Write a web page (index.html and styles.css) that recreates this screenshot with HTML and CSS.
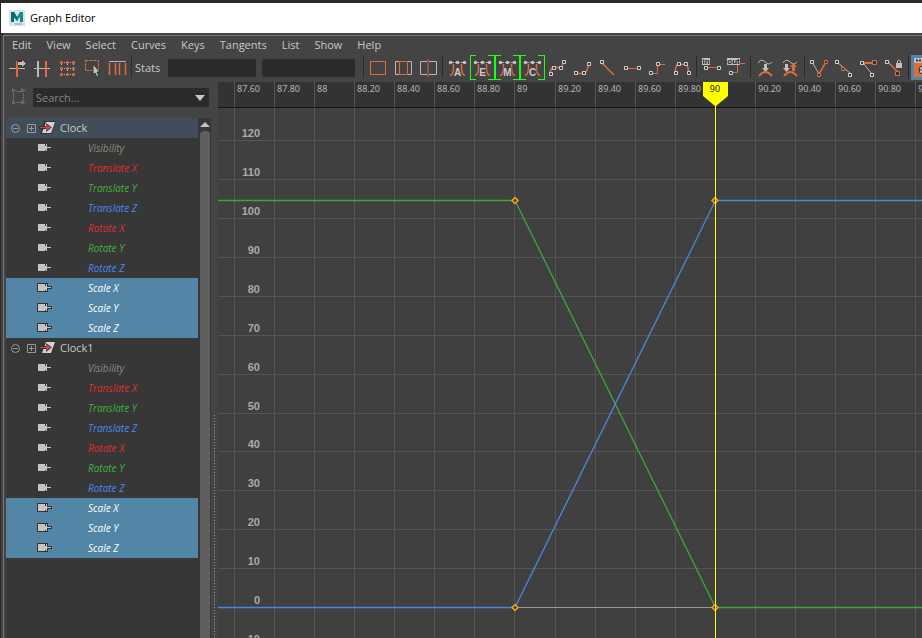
FILE: index.html
```
<!DOCTYPE html>
<html lang="en">
<head>
<meta charset="utf-8">
<title>Graph Editor</title>
<link rel="stylesheet" href="styles.css">
</head>
<body>
<svg class="defs" aria-hidden="true">
  <symbol id="pin" viewBox="0 0 18 12"><path class="pin-edge" d="M2 2H9V4H10V2H11V5H15V6H11V9H10V8H9V9H2Z"/><path class="pin-body" d="M2 2H9V4H10V2H11V5H15V6H11V9H10V8H9V9H2Z"/></symbol>
  <symbol id="node" viewBox="0 0 18 14"><path d="M5 0H17L12 13H1Z" fill="#333"/><path d="M7 1H16L12 12H3Z" fill="#d2d2d2"/><path d="M0 6.500H8" stroke="#333" stroke-width="3"/><path d="M7 2L13 6.500L7 11Z" fill="#444"/><path d="M1 6.500H9" stroke="#d04545" stroke-width="1"/><path d="M7 4L12 6.500L7 9Z" fill="#d04545"/></symbol>
  <symbol id="tangent" viewBox="0 0 25 25"><path class="g" d="M4 7.500H21" stroke-dasharray="2 1"/><g class="gd"><circle cx="5.500" cy="7.500" r="1.800"/><circle cx="12.500" cy="7.500" r="1.800"/><circle cx="19.500" cy="7.500" r="1.800"/></g><path class="o d" d="M5 20.500Q9 20 8.500 9M20 20.500Q16 20 16.500 9"/></symbol>
</svg>
<main class="window">
  <header class="title">
    <svg width="16" height="16" viewBox="0 0 16 16"><path d="M0 0H16V16H0Z" fill="#d5e4e6"/><path d="M2 12V2H5L8 7L11 2H14V12H11V7L8 11L5 7V12Z" fill="#138b91"/><path d="M2 2H5L8 7V11L5 7V12H2Z" fill="#0b6970"/><path d="M6 14H13" stroke="#69aeb2"/></svg>
    <h1>Graph Editor</h1>
  </header>
  <div class="editor">
    <nav class="menu"><a href="#edit">Edit</a><a href="#view">View</a><a href="#select">Select</a><a href="#curves">Curves</a><a href="#keys">Keys</a><a href="#tangents">Tangents</a><a href="#list">List</a><a href="#show">Show</a><a href="#help">Help</a></nav>
    <div class="toolbar">
      <button aria-label="Move nearest key"><svg><path class="g" d="M4 13.500H20"/><path class="o2" d="M12 6V22"/><path class="dark" d="M12 5H16V4L22 8.500L16 13V11H13Z"/><path class="gf" d="M13 7H17V5L21 8.500L17 12V10H13Z"/></svg></button>
      <button aria-label="Insert keys"><svg><path class="g" d="M4 13.500H7M9 13.500H15M17 13.500H20"/><path class="g2" d="M8 6V22"/><path class="o2" d="M16 6V22"/></svg></button>
      <button aria-label="Lattice deform"><svg><path class="dots" d="M6 7.500H20M6 13.500H20M6 19.500H20M6.500 6V21M12.500 6V21M18.500 6V21"/><g class="of"><circle cx="6.500" cy="7.500" r="1.600"/><circle cx="12.500" cy="7.500" r="1.600"/><circle cx="18.500" cy="7.500" r="1.600"/><circle cx="6.500" cy="13.500" r="1.600"/><circle cx="12.500" cy="13.500" r="1.600"/><circle cx="18.500" cy="13.500" r="1.600"/><circle cx="6.500" cy="19.500" r="1.600"/><circle cx="12.500" cy="19.500" r="1.600"/><circle cx="18.500" cy="19.500" r="1.600"/></g></svg></button>
      <button aria-label="Region tool"><svg><path class="o dash" d="M5.500 5.500H18.500V15.500H5.500Z"/><path class="gf edge" d="M13 9L20 17H17L19 21L17 22L15 18L13 20Z"/></svg></button>
      <button aria-label="Retime tool"><svg><path class="g" d="M4 6.500H21"/><path class="o d" d="M4.500 8V20M10.500 8V20M14.500 8V20M20.500 8V20"/></svg></button>
      <span class="sep"></span>
      <label class="stats" for="time">Stats</label><input id="time" class="field time" type="text"><input class="field value" type="text" aria-label="Value">
      <span class="sep"></span>
      <button aria-label="Frame all"><svg><path class="o" d="M4.500 6.500H19.500V19.500H4.500Z"/></svg></button>
      <button aria-label="Frame playback range"><svg><path class="g" d="M8 6.500H4.500V19.500H8M17 6.500H20.500V19.500H17"/><path class="o" d="M8.500 6.500H16.500V19.500H8.500Z"/></svg></button>
      <button aria-label="Center view"><svg><path class="g" d="M11 6.500H4.500V19.500H11M13 6.500H20.500V19.500H13"/><path d="M12 4V22" stroke="#915342" stroke-width="2"/></svg></button>
      <span class="sep"></span>
      <button class="tan" aria-label="Auto tangents"><svg><use href="#tangent"/><text x="12.500" y="21">A</text></svg></button>
      <button class="tan on" aria-label="Ease tangents"><svg><use href="#tangent"/><text x="12.500" y="21">E</text></svg></button>
      <button class="tan on" aria-label="Mix tangents"><svg><use href="#tangent"/><text x="12.500" y="21">M</text></svg></button>
      <button class="tan on" aria-label="Custom tangents"><svg><use href="#tangent"/><text x="12.500" y="21">C</text></svg></button>
      <button aria-label="Spline tangents"><svg><path class="o d" d="M5.500 19V16Q6 13 8.500 12.500H15Q18 12 18.500 6"/><path class="k" d="M4.500 17.500h3v3h-3zM7.500 11.500h3v3h-3zM14.500 11.500h3v3h-3zM17.500 5.500h3v3h-3z"/></svg></button>
      <button aria-label="Clamped tangents"><svg><path class="o d" d="M5 18.500H13Q18 18 18.500 8"/><path class="k" d="M4.500 16.500h3v3h-3zM12.500 16.500h3v3h-3zM17.500 7.500h3v3h-3z"/></svg></button>
      <button aria-label="Linear tangents"><svg><path class="o d" d="M6 7L19 20"/><path class="k" d="M5.500 5.500h3v3h-3z"/></svg></button>
      <button aria-label="Flat tangents"><svg><path class="o" d="M5 13.500H19"/><path class="k" d="M4.500 11.500h3v3h-3zM17.500 11.500h3v3h-3z"/></svg></button>
      <button aria-label="Step tangents"><svg><path class="o" d="M5 18.500H12.500V9.500H20"/><path class="k" d="M4.500 16.500h3v3h-3zM11.500 7.500h3v3h-3z"/></svg></button>
      <button aria-label="Plateau tangents"><svg><path class="o d" d="M5.500 17V14Q6 10 8 9.500H16Q18 10 18.500 17"/><path class="k" d="M4.500 16.500h3v3h-3zM7.500 7.500h3v3h-3zM14.500 7.500h3v3h-3zM17.500 16.500h3v3h-3z"/></svg></button>
      <span class="sep"></span>
      <button class="tag" aria-label="In tangent"><svg><path class="o" d="M7 12.500H20"/><path class="k" d="M5.500 11.500h3v3h-3zM18.500 11.500h3v3h-3z"/><path class="gf" d="M3 3H11V10H3Z"/><text x="7" y="9">in</text></svg></button>
      <button class="tag" aria-label="Out tangent"><svg><path class="o" d="M7 17.500H13.500V8.500H21"/><path class="k" d="M5.500 16.500h3v3h-3z"/><path class="gf" d="M3 3H16V10H3Z"/><text x="9.500" y="9">out</text></svg></button>
      <span class="sep"></span>
      <button aria-label="Buffer snapshot"><svg><path class="g" d="M5 8Q8 3 12 7T19 7"/><path class="gf" d="M11 9H14V13H16L12.500 17L9 13H11Z"/><path class="o2" d="M6 21Q12 13 19 21"/></svg></button>
      <button aria-label="Swap buffers"><svg><path class="g" d="M5 8Q8 3 12 7T19 7"/><path class="gf" d="M7 9H10V13H12L8.500 17L5 13H7Z"/><path class="of" d="M14 16V12H12L15.500 8L19 12H17V16Z"/><path class="o2" d="M6 21Q12 13 19 21"/></svg></button>
      <span class="sep"></span>
      <button aria-label="Break tangents"><svg><path class="g" d="M5 7L12 19"/><path class="o d" d="M12 19L19 7"/><path class="k" d="M3.500 5.500h3v3h-3z"/><path class="ko" d="M10.500 18.500h3v3h-3zM17.500 5.500h3v3h-3z"/></svg></button>
      <button aria-label="Unify tangents"><svg><path class="g" d="M5 7L19 19"/><path class="k" d="M3.500 5.500h3v3h-3zM16.500 18.500h3v3h-3z"/><path class="ko" d="M9.500 12.500h3v3h-3z"/></svg></button>
      <button aria-label="Free tangent length"><svg><path class="o2" d="M5 8H16"/><path class="g" d="M6 8L15 19"/><path class="k" d="M3.500 6.500h3v3h-3zM13.500 18.500h3v3h-3z"/><path class="ko" d="M15.500 5.500h4v4h-4z"/></svg></button>
      <button aria-label="Lock tangent length"><svg><path class="o d" d="M6 7L15 16"/><path class="k" d="M3.500 5.500h3v3h-3z"/><path class="ko" d="M13.500 16.500h4v4h-4z"/><path class="gf" d="M14 8H20V13H14Z"/><path class="g" d="M15.500 8V6Q17 4 18.500 6V8"/></svg></button>
      <span class="sep"></span>
      <button class="active" aria-label="Auto load"><svg><path class="gf" d="M3 3H25V8H3Z"/><path class="of" d="M3 8H25V22H3Z"/><path d="M5 5.500H25" stroke="#333" stroke-width="2" stroke-dasharray="2 1"/><circle cx="12" cy="15" r="4" fill="#ccc" stroke="#333"/><path d="M8 15H16M12 11V19" stroke="#333"/></svg></button>
    </div>
    <div class="body">
      <aside>
        <div class="search">
          <svg width="17" height="18"><path d="M3.500 5V13M13.500 5V13M6 3.500H12M6 14.500H12" fill="none" stroke="#686868"/><path d="M2 0L6 2.500L2 5ZM11 0L16 2.500L11 5ZM2 12L6 14.500L2 17ZM11 12L16 14.500L11 17Z" fill="#686868"/></svg>
          <div class="combo"><input type="text" placeholder="Search..." aria-label="Search"><button aria-label="Search options"></button></div>
        </div>
        <div class="outliner">
          <ul id="tree"></ul>
          <div class="scroll"><i></i></div>
        </div>
      </aside>
      <div class="grip"></div>
      <section class="graph">
        <div class="ruler" id="ruler"></div>
        <svg class="plot" id="plot" role="img" aria-label="Animation curves"></svg>
        <div class="playhead"><output>90</output></div>
      </section>
    </div>
  </div>
</main>
<script src="script.js"></script>
</body>
</html>
```
FILE: styles.css
```
* { box-sizing: border-box; }
body { margin: 0; background: #2b2b2b; color: #c8c8c8; font: 11px/20px "Open Sans", "Noto Sans", sans-serif; }
.defs { position: absolute; width: 0; height: 0; }
.window { height: 100vh; display: flex; flex-direction: column; padding: 3px 0 0 1px; overflow: hidden; }
.title { flex: none; height: 30px; display: flex; align-items: center; gap: 5px; padding-left: 8px; background: #fff; color: #000; }
.title h1 { margin: 0; font: inherit; }
.editor { flex: 1; min-height: 0; display: flex; flex-direction: column; margin: 2px 0 0 2px; border: solid #777; border-width: 1px 0 0 1px; background: #444; box-shadow: 0 -2px #444, -2px 0 #444; }
.menu { display: flex; gap: 15px; padding: 0 8px; height: 19px; line-height: 18px; }
.menu a { color: #c8c8c8; text-decoration: none; }
.toolbar { display: flex; height: 27px; align-items: start; padding-left: 1px; overflow: hidden; }
button { border: 0; padding: 0; background: none; color: inherit; font: inherit; }
.toolbar button { flex: none; width: 25px; height: 25px; }
.toolbar button svg { display: block; width: 25px; height: 25px; }
.sep { flex: none; width: 1px; height: 22px; margin: 1px 2px 0 1px; background: #2b2b2b; }
.stats { flex: none; margin-left: 1px; width: 33px; line-height: 25px; }
.field { flex: none; height: 18px; margin-top: 4px; border: 0; border-radius: 2px; background: #2b2b2b; color: #c8c8c8; font: inherit; }
.time { width: 88px; margin-right: 6px; }
.value { width: 93px; margin-right: 7px; }
.g, .g2, .o, .o2, .dots { fill: none; stroke: #b9b9b9; }
.g2 { stroke-width: 2; }
.o, .o2 { stroke: #e06b3c; }
.o2 { stroke-width: 2; }
.d { stroke-width: 1.5; }
.gf, .gd { fill: #c0c0c0; }
.of { fill: #e06b3c; }
.dark { fill: #333; }
.dots { stroke-dasharray: 1 2; }
.dash { stroke-dasharray: 3 1; }
.edge { stroke: #333; }
.k, .ko { fill: #333; stroke: #d2d2d2; }
.ko { stroke: #e06b3c; }
.tan text { font: bold 10px "Liberation Sans", sans-serif; text-anchor: middle; fill: #ccc; stroke: #444; stroke-width: 1; paint-order: stroke; }
.tag text { font: bold 8px "Liberation Sans", sans-serif; text-anchor: middle; fill: #222; }
.tan.on { border: 1px solid #1cff12; clip-path: polygon(0 0, 6px 0, 6px 3px, 18px 3px, 18px 0, 100% 0, 100% 100%, 18px 100%, 18px 23px, 6px 23px, 6px 100%, 0 100%); }
.tan.on svg { margin: -1px; }
.toolbar .active { background: #5285a6; }
.body { flex: 1; min-height: 0; display: flex; }
aside { flex: none; width: 207px; display: flex; flex-direction: column; padding-left: 2px; }
.search { height: 36px; display: flex; align-items: start; gap: 6px; padding: 6px 2px 0 4px; }
.search svg { flex: none; }
.combo { flex: 1; min-width: 0; height: 19px; display: flex; background: #2b2b2b; border-radius: 2px; }
.combo input { flex: 1; min-width: 0; padding: 0 3px; border: 0; background: none; color: #c8c8c8; font: inherit; }
.combo input::placeholder { color: #858585; opacity: 1; }
.combo button { width: 10px; height: 6px; margin: 7px 4px; background: #c8c8c8; clip-path: polygon(0 0, 100% 0, 50% 100%); }
.outliner { flex: 1; min-height: 0; display: flex; background: #373737; }
.outliner ul { flex: 1; margin: 0; padding: 0; list-style: none; }
.outliner li { height: 20px; display: flex; align-items: center; }
.object { gap: 3px; padding-left: 5px; }
.object svg:first-child { margin-right: 4px; }
.object.lit { background: #414d5b; }
.channel { padding-left: 30px; font-style: italic; font-size: 10px; }
.channel svg { width: 18px; height: 12px; margin-right: 34px; }
.pin-edge { fill: none; stroke: var(--pin-edge, none); stroke-width: 2; }
.pin-body { fill: #c4c4c4; }
.vis { color: #8b8b7c; }
.x { color: #df2e2e; }
.y { color: #3fb13f; }
.z { color: #4c86ee; }
.sel { color: #fff; background: #5285a6; --pin-edge: #333; }
.scroll { width: 13px; padding: 4px 1px 0 2px; background: #373737; }
.scroll::before { content: ""; display: block; height: 5px; background: #c0c0c0; clip-path: polygon(50% 0, 100% 100%, 0 100%); }
.scroll i { display: block; height: calc(100% - 5px); margin-top: 4px; border-radius: 4px 4px 0 0; background: #5f5f5f; }
.grip { flex: none; width: 7px; padding-left: 3px; }
.grip::before { content: ""; display: block; width: 1px; height: calc(100% - 333px); margin-top: 333px; background: repeating-linear-gradient(#999 0 1px, transparent 1px 3px); }
.graph { position: relative; flex: 1; min-width: 0; display: flex; flex-direction: column; overflow: hidden; background: #404040; }
.ruler { flex: none; height: 26px; display: flex; padding-left: 16px; overflow: hidden; background: #333; border-bottom: 1px solid #151515; color: #b4b4b4; font: 9px/14px "Noto Sans", sans-serif; }
.ruler span { flex: none; width: 40px; padding-left: 2px; border-left: 1px solid #555; }
.ruler .wide { width: 41px; }
.plot { flex: 1; width: 100%; min-height: 0; }
.grid { stroke: #555; shape-rendering: crispEdges; }
.plot text { font: bold 11px "Liberation Sans", sans-serif; fill: #aaa; text-anchor: end; }
.curve { fill: none; stroke: #39a839; stroke-width: 1.3; }
.curve.blue { stroke: #4a86dd; }
.curve.zero { stroke: #999; stroke-width: 1; }
.key { fill: #404040; stroke: #ffa40b; stroke-width: 1.5; }
.playhead { position: absolute; left: 485px; top: 0; bottom: 0; width: 25px; background: linear-gradient(#ff0, #ff0) 12px 0 / 1px 100% no-repeat; pointer-events: none; }
.playhead output { display: block; height: 24px; padding-right: 1px; text-align: center; color: #222; background: #ff0; font: 9px/14px "Noto Sans", sans-serif; clip-path: polygon(0 0, 100% 0, 100% 14px, 13px 100%, 12px 100%, 0 14px); }
```
FILE: script.js
```
const channels = ["Visibility", "Translate X", "Translate Y", "Translate Z", "Rotate X", "Rotate Y", "Rotate Z", "Scale X", "Scale Y", "Scale Z"];
const tree = ["Clock", "Clock1"].map((name, n) => {
  const head = `<li class="object${n ? "" : " lit"}"><svg width="9" height="9" viewBox="0 0 9 9"><circle cx="4.5" cy="4.5" r="4" fill="none" stroke="#999"/><path d="M2 4.5H7" stroke="#999"/></svg><svg width="9" height="9"><path d="M.5 .5H8.500V8.500H.5ZM2 4.500H7M4.500 2V7" fill="none" stroke="#999"/></svg><svg width="18" height="14"><use href="#node"/></svg><span>${name}</span></li>`;
  const rows = channels.map((label, i) => {
    const kind = i > 6 ? "sel" : i === 0 ? "vis" : label.slice(-1).toLowerCase();
    return `<li class="channel ${kind}"><svg><use href="#pin"/></svg>${label}</li>`;
  });
  return head + rows.join("");
});
document.getElementById("tree").innerHTML = tree.join("");

let ruler = "";
for (let i = 0; i < 18; i++) {
  const t = 8760 + i * 20;
  ruler += `<span class="${i === 7 ? "wide" : ""}">${i === 12 ? "" : t % 100 ? (t / 100).toFixed(2) : t / 100}</span>`;
}
document.getElementById("ruler").innerHTML = ruler;

const zero = 499.5;
const step = 38.9;
let plot = "";
for (let i = 0; i < 18; i++) {
  const x = 16.5 + i * 40 + (i > 7 ? 1 : 0);
  plot += `<line class="grid" x1="${x}" x2="${x}" y1="0" y2="100%"/>`;
}
for (let v = -1; v < 13; v++) {
  const y = Math.round(zero - v * step - 0.5) + 0.5;
  plot += `<line class="grid" x1="0" x2="100%" y1="${y}" y2="${y}"/><text x="42" y="${y - 4}">${v * 10}</text>`;
}
plot += `<line class="curve zero" x1="297" x2="497" y1="499.5" y2="499.5"/>
<line class="curve" x1="0" x2="297" y1="92.5" y2="92.5"/><line class="curve" x1="297" y1="92.5" x2="497.5" y2="499.5"/><line class="curve" x1="497" x2="100%" y1="499.5" y2="499.5"/>
<line class="curve blue" x1="0" x2="297" y1="499.5" y2="499.5"/><line class="curve blue" x1="297" y1="499.5" x2="497.5" y2="92.5"/><line class="curve blue" x1="497" x2="100%" y1="92.5" y2="92.5"/>`;
for (const [x, y] of [[297, 92.5], [497, 92.5], [297, 499.5], [497, 499.5]]) {
  plot += `<path class="key" d="M${x} ${y - 3}l3 3-3 3-3-3z"/>`;
}
document.getElementById("plot").innerHTML = plot;
```
